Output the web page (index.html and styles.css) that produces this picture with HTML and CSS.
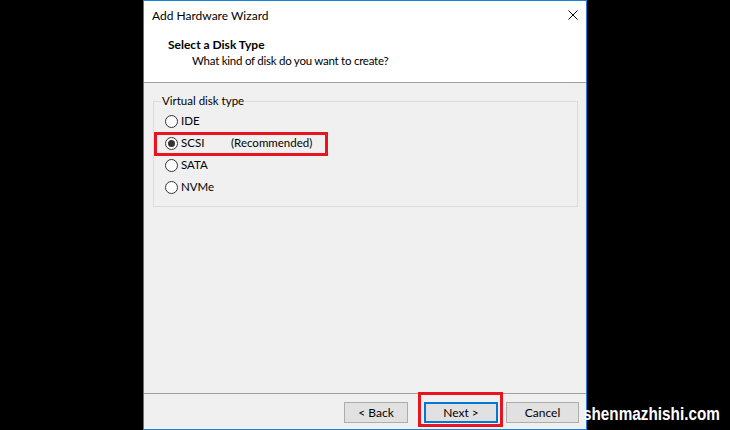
FILE: index.html
```html
<!DOCTYPE html>
<html>
<head>
<meta charset="utf-8">
<link rel="stylesheet" href="styles.css">
</head>
<body>
<div class="screen">
  <div class="window">
    <div class="titlebar">
      <span class="title">Add Hardware Wizard</span>
      <svg class="close" width="10" height="10" viewBox="0 0 10 10"><path d="M0.5 0.5 L9.5 9.5 M9.5 0.5 L0.5 9.5" stroke="#000" stroke-width="1" fill="none"/></svg>
    </div>
    <div class="header">
      <div class="heading">Select a Disk Type</div>
      <div class="subheading">What kind of disk do you want to create?</div>
    </div>
    <div class="main">
      <fieldset class="group">
        <legend class="legend">Virtual disk type</legend>
        <div class="option"><span class="radio"></span><span class="label">IDE</span></div>
        <div class="option marked"><span class="radio checked"></span><span class="label name">SCSI</span><span class="label">(Recommended)</span></div>
        <div class="option"><span class="radio"></span><span class="label">SATA</span></div>
        <div class="option"><span class="radio"></span><span class="label">NVMe</span></div>
      </fieldset>
    </div>
    <div class="footer">
      <button class="btn back">&lt; Back</button>
      <button class="btn next">Next &gt;</button>
      <button class="btn cancel">Cancel</button>
    </div>
  </div>
  <div class="watermark">shenmazhishi.com</div>
</div>
</body>
</html>
```
FILE: styles.css
```css
html, body {
  margin: 0;
  padding: 0;
  background: #000;
}
body {
  font-family: Lato, "Noto Sans", sans-serif;
  font-size: 11.5px;
  color: #000;
}
.screen {
  position: relative;
  width: 730px;
  height: 430px;
  overflow: hidden;
}
.window {
  box-sizing: border-box;
  margin-left: 143px;
  width: 444px;
  height: 430px;
  border: 1px solid #1883d7;
  background: #f0f0f0;
  display: flex;
  flex-direction: column;
}
.titlebar {
  height: 30px;
  background: #fff;
  display: flex;
  align-items: center;
  justify-content: space-between;
  padding: 0 8px 1px 8px;
  box-sizing: border-box;
}
.title {
  font-size: 12px;
  line-height: 16px;
}
.close {
  display: block;
  margin-top: -2px;
}
.header {
  background: #fff;
  padding: 6px 0 13px 24px;
  border-bottom: 1px solid #a0a0a0;
  line-height: 16px;
}
.heading {
  font-weight: bold;
  font-size: 12px;
}
.subheading {
  padding-left: 24px;
  letter-spacing: -0.25px;
}
.main {
  flex: 1;
  padding: 10px 8px 0 9px;
}
.group {
  margin: 0;
  padding: 1px 7px 8px 7px;
  border: 1px solid #dcdcdc;
}
.legend {
  padding: 0 1px;
  line-height: 16px;
}
.option {
  position: relative;
  height: 22px;
  display: flex;
  align-items: center;
  padding-left: 4px;
}
.radio {
  box-sizing: border-box;
  width: 13px;
  height: 13px;
  border: 1px solid #333;
  border-radius: 50%;
  background: #fff;
  margin-right: 3px;
  display: flex;
  align-items: center;
  justify-content: center;
}
.radio.checked::before {
  content: "";
  width: 7px;
  height: 7px;
  border-radius: 50%;
  background: #333;
}
.label {
  line-height: 16px;
}
.name {
  width: 50px;
}
.marked::after {
  content: "";
  position: absolute;
  left: -7px;
  top: 0px;
  width: 174px;
  height: 24px;
  box-sizing: border-box;
  border: 3px solid #e8141f;
}
.footer {
  border-top: 1px solid #a0a0a0;
  padding: 8px 7px 6px 0;
  display: flex;
  justify-content: flex-end;
}
.btn {
  font-family: inherit;
  font-size: 12px;
  color: #000;
  height: 21px;
  box-sizing: border-box;
  background: #e1e1e1;
  border: 1px solid #adadad;
  padding: 0;
  margin: 0;
  line-height: 17px;
}
.back {
  width: 64px;
  margin-right: 16px;
}
.next {
  position: relative;
  width: 74px;
  margin-right: 8px;
  border: 2px solid #0078d7;
}
.next::after {
  content: "";
  position: absolute;
  left: -8px;
  top: -12px;
  right: -7px;
  bottom: -6px;
  border: 3px solid #e8141f;
}
.cancel {
  width: 73px;
}
.watermark {
  position: absolute;
  left: 583px;
  top: 403px;
  color: #fff;
  font-family: "Liberation Sans", Arial, sans-serif;
  font-weight: bold;
  font-size: 18px;
  line-height: 22px;
  white-space: nowrap;
  transform: scaleX(0.85);
  transform-origin: left center;
}
```
